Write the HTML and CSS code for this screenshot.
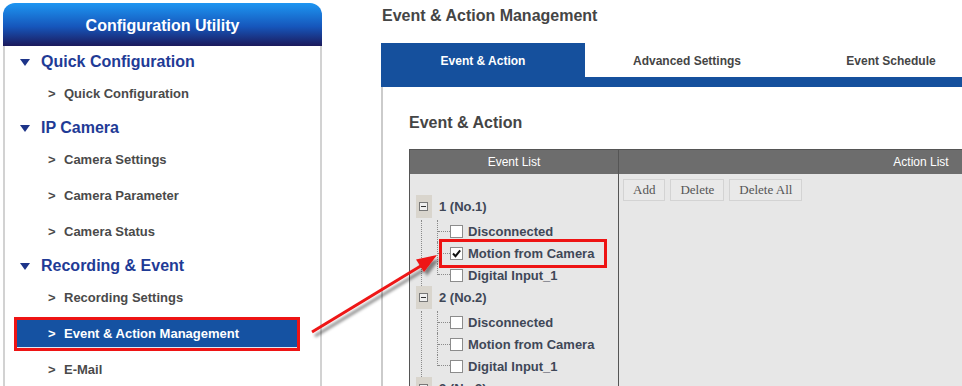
FILE: index.html
```html
<!DOCTYPE html>
<html lang="en">
<head>
  <meta charset="UTF-8">
  <meta name="viewport" content="width=device-width, initial-scale=1.0">
  <title>Event &amp; Action Management</title>
  <link rel="stylesheet" href="styles.css">
</head>
<body>

  <div class="page">
    <aside class="sidebar">
      <div class="sidebar-title">Configuration Utility</div>
      <nav class="sidebar-nav">
        <div class="nav-section"><span class="tri"></span>Quick Configuration</div>
        <div class="nav-item"><a href="#" class="nav-link"><span class="caret">&gt;</span>Quick Configuration</a></div>

        <div class="nav-section"><span class="tri"></span>IP Camera</div>
        <div class="nav-item"><a href="#" class="nav-link"><span class="caret">&gt;</span>Camera Settings</a></div>
        <div class="nav-item"><a href="#" class="nav-link"><span class="caret">&gt;</span>Camera Parameter</a></div>
        <div class="nav-item"><a href="#" class="nav-link"><span class="caret">&gt;</span>Camera Status</a></div>

        <div class="nav-section"><span class="tri"></span>Recording &amp; Event</div>
        <div class="nav-item"><a href="#" class="nav-link"><span class="caret">&gt;</span>Recording Settings</a></div>
        <div class="nav-item"><a href="#" class="nav-link active"><span class="caret">&gt;</span>Event &amp; Action Management</a></div>
        <div class="nav-item"><a href="#" class="nav-link"><span class="caret">&gt;</span>E-Mail</a></div>
      </nav>
    </aside>

    <main class="main">
      <h1 class="page-title">Event &amp; Action Management</h1>

      <div class="tabs">
        <a href="#" class="tab active">Event &amp; Action</a>
        <a href="#" class="tab">Advanced Settings</a>
        <a href="#" class="tab">Event Schedule</a>
      </div>

      <div class="content">
        <h2 class="content-title">Event &amp; Action</h2>

        <div class="event-table">
          <div class="th th-event">Event List</div>
          <div class="th th-action">Action List</div>

          <div class="event-col">
            <div class="group">
              <span class="tile"><span class="minus"></span></span>
              <span class="group-label">1 (No.1)</span>
              <span class="stem"></span>
              <ul class="children">
                <li><span class="branch"></span><span class="cb"></span>Disconnected</li>
                <li><span class="branch"></span><span class="mark"><span class="cb checked"><svg width="11" height="11" viewBox="0 0 11 11"><path d="M2 5.5 L4.5 8.2 L9.2 2.4" fill="none" stroke="#111" stroke-width="2"/></svg></span>Motion from Camera</span></li>
                <li class="last"><span class="branch"></span><span class="cb"></span>Digital Input_1</li>
              </ul>
            </div>
            <div class="group">
              <span class="tile"><span class="minus"></span></span>
              <span class="group-label">2 (No.2)</span>
              <span class="stem"></span>
              <ul class="children">
                <li><span class="branch"></span><span class="cb"></span>Disconnected</li>
                <li><span class="branch"></span><span class="cb"></span>Motion from Camera</li>
                <li class="last"><span class="branch"></span><span class="cb"></span>Digital Input_1</li>
              </ul>
            </div>
            <div class="group">
              <span class="tile"><span class="minus"></span></span>
              <span class="group-label">3 (No.3)</span>
              <span class="stem"></span>
              <ul class="children">
                <li><span class="branch"></span><span class="cb"></span>Disconnected</li>
              </ul>
            </div>
          </div>

          <div class="action-col">
            <button class="btn">Add</button>
            <button class="btn">Delete</button>
            <button class="btn">Delete All</button>
          </div>
        </div>
      </div>
    </main>
  </div>

  <!-- callout arrow from the menu item to the checked event -->
  <svg class="arrow" width="962" height="386" viewBox="0 0 962 386">
    <defs>
      <filter id="shadow" x="-20%" y="-20%" width="140%" height="140%">
        <feDropShadow dx="3" dy="4" stdDeviation="1.6" flood-color="#000" flood-opacity="0.45"/>
      </filter>
    </defs>
    <g filter="url(#shadow)">
      <line x1="312" y1="332" x2="424" y2="264" stroke="#ee1414" stroke-width="3"/>
      <polygon points="437,255 416,259.5 424,272" fill="#ee1414"/>
    </g>
  </svg>

</body>
</html>
```

FILE: styles.css
```css
body {
  margin: 0;
  padding: 0;
  background: #fff;
  font-family: "Liberation Sans", Arial, sans-serif;
  color: #4a4a4a;
  overflow: hidden;
}

.page {
  display: flex;
  align-items: flex-start;
  padding: 3px 0 0 3px;
  width: 1300px;
}

/* sidebar */

.sidebar {
  width: 319px;
  flex: 0 0 319px;
}

.sidebar-title {
  height: 43px;
  line-height: 45px;
  text-align: center;
  color: #fff;
  font-size: 16px;
  font-weight: bold;
  border-radius: 12px 12px 0 0;
  background: linear-gradient(#1d96f2, #1656bb 55%, #1c1a5c);
}

.sidebar-nav {
  border-left: 2px solid #d2d2d2;
  border-right: 2px solid #d2d2d2;
  padding-top: 1px;
  height: 400px;
}

.nav-section {
  display: flex;
  align-items: center;
  height: 30px;
  padding: 0 0 0 15px;
  box-sizing: border-box;
  font-size: 16px;
  font-weight: bold;
  color: #1f3b96;
}

.tri {
  width: 0;
  height: 0;
  border-left: 5px solid transparent;
  border-right: 5px solid transparent;
  border-top: 7px solid #1d3489;
  margin: 1px 11px 0 0;
}

.nav-item {
  padding: 3px 23px 5px 12px;
}

.nav-link {
  display: flex;
  padding-left: 31px;
  line-height: 27px;
  border-bottom: 1px solid transparent;
  font-size: 13px;
  font-weight: bold;
  color: #4a4a4a;
  text-decoration: none;
}

.nav-link .caret {
  width: 16px;
}

.nav-link.active {
  background: #1552a2;
  color: #fff;
  border-bottom-color: #dfe8f2;
  outline: 3px solid #ee1414;
}

/* main */

.main {
  margin-left: 59px;
  flex: 0 0 860px;
}

.page-title {
  margin: 3px 0 17px 1px;
  font-size: 16px;
  line-height: 20px;
  color: #454545;
}

.tabs {
  display: flex;
  border-bottom: 10px solid #15509d;
}

.tab {
  width: 204px;
  height: 34px;
  line-height: 36px;
  text-align: center;
  font-size: 12px;
  font-weight: bold;
  color: #454545;
  text-decoration: none;
}

.tab.active {
  background: #15509d;
  color: #fff;
}

.content {
  border-left: 2px solid #cbcbcb;
  padding: 25px 0 0 26px;
  height: 320px;
}

.content-title {
  margin: 0 0 15px;
  font-size: 16px;
  line-height: 22px;
  color: #454545;
}

/* event table */

.event-table {
  display: grid;
  grid-template-columns: 209px 604px;
  border: 1px solid #555;
  background: #e7e7e7;
}

.th {
  height: 24px;
  line-height: 24px;
  text-align: center;
  background: #6d6d6d;
  color: #fff;
  font-size: 12px;
}

.th-event,
.event-col {
  border-right: 1px solid #555;
}

.event-col {
  padding: 21px 0 0 6px;
  height: 240px;
  color: #3f4757;
  font-size: 13px;
  font-weight: bold;
}

.action-col {
  display: flex;
  align-items: flex-start;
  gap: 5px;
  padding: 5px 0 0 4px;
}

.btn {
  height: 22px;
  padding: 0 9px;
  border: 1px solid #d3d3d3;
  background: #e9e9e9;
  font-family: "Liberation Serif", "Times New Roman", serif;
  font-size: 13px;
  color: #555;
}

/* tree */

.group {
  display: grid;
  grid-template-columns: 21px 1fr;
}

.tile {
  width: 16px;
  height: 23px;
  margin-bottom: 2px;
  background: #d9d5cd;
  display: flex;
  align-items: center;
  padding-left: 3px;
  box-sizing: border-box;
}

.minus {
  width: 9px;
  height: 9px;
  box-sizing: border-box;
  border: 1px solid #777;
  background: #efefef;
  display: flex;
  align-items: center;
  justify-content: center;
}

.minus::after {
  content: "";
  width: 5px;
  border-top: 1px solid #333;
}

.group-label {
  display: flex;
  align-items: center;
  height: 23px;
  padding-left: 2px;
}

.stem {
  margin-left: 5px;
  border-left: 1px dotted #8a8a8a;
}

.children {
  list-style: none;
  margin: 0;
  padding: 0;
}

.children li {
  display: flex;
  align-items: center;
  height: 22px;
}

.branch {
  align-self: stretch;
  width: 12px;
  border-left: 1px dotted #8a8a8a;
  display: flex;
  align-items: center;
}

.branch::after {
  content: "";
  width: 12px;
  border-top: 1px dotted #8a8a8a;
}

.children li.last .branch {
  align-self: flex-start;
  height: 11px;
  align-items: flex-end;
}

.cb {
  width: 13px;
  height: 13px;
  box-sizing: border-box;
  border: 1px solid #8c8c8c;
  background: #fff;
  margin-right: 5px;
  display: flex;
  align-items: center;
  justify-content: center;
}

.mark {
  display: flex;
  align-items: center;
  height: 23px;
  margin-left: -8px;
  padding: 0 10px 0 8px;
  outline: 3px solid #ee1414;
}

/* callout */

.arrow {
  position: absolute;
  top: 0;
  left: 0;
  pointer-events: none;
}
```
